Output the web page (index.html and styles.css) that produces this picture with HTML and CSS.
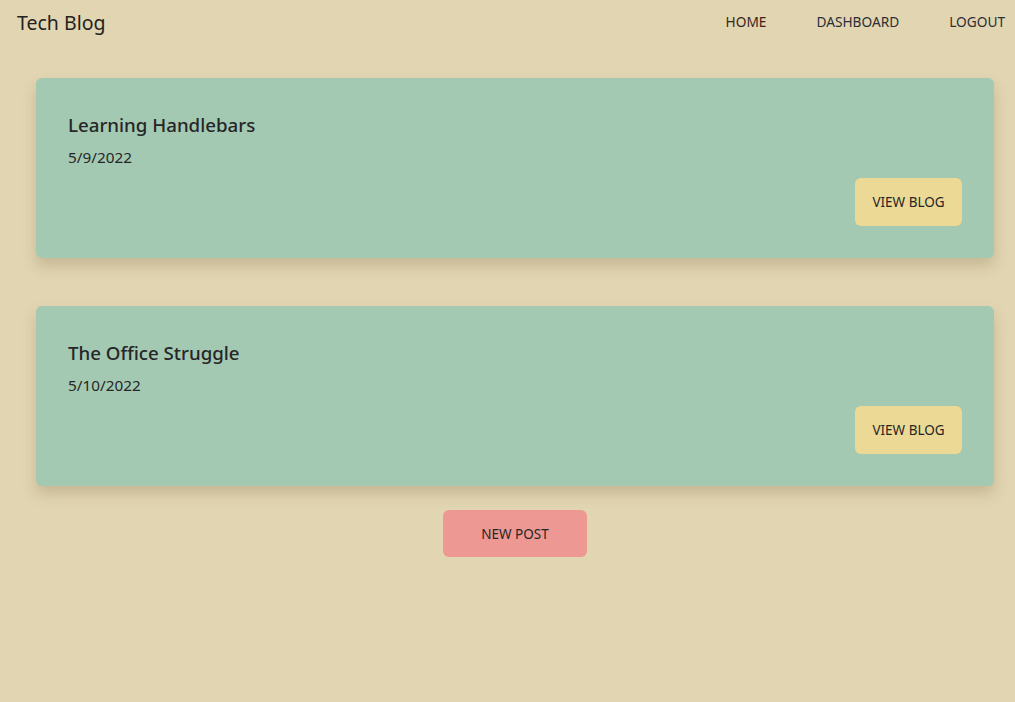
FILE: index.html
```html
<!DOCTYPE html>
<html>
<head>
<meta charset="utf-8">
<title>Tech Blog</title>
<link rel="stylesheet" href="styles.css">
</head>
<body>
<header class="navbar">
  <a class="brand" href="#">Tech Blog</a>
  <nav class="nav">
    <a class="nav-link active" href="#">HOME</a>
    <a class="nav-link" href="#">DASHBOARD</a>
    <a class="nav-link" href="#">LOGOUT</a>
  </nav>
</header>
<main class="content">
  <article class="card">
    <h2 class="card-title">Learning Handlebars</h2>
    <p class="card-date">5/9/2022</p>
    <div class="card-actions"><a class="btn btn-view" href="#">VIEW BLOG</a></div>
  </article>
  <article class="card">
    <h2 class="card-title">The Office Struggle</h2>
    <p class="card-date">5/10/2022</p>
    <div class="card-actions"><a class="btn btn-view" href="#">VIEW BLOG</a></div>
  </article>
  <div class="new-post-row"><a class="btn btn-new" href="#">NEW POST</a></div>
</main>
</body>
</html>
```
FILE: styles.css
```css
* { box-sizing: border-box; }
html, body { margin: 0; padding: 0; }
body {
  background: #e2d5b2;
  font-family: "Noto Sans", "Open Sans", sans-serif;
  color: #262626;
  min-height: 702px;
}
a { text-decoration: none; color: inherit; }
.navbar {
  display: flex;
  justify-content: space-between;
  align-items: center;
  height: 44px;
  padding: 0 10px 0 17px;
}
.brand {
  font-size: 19.5px;
  color: #222;
}
.nav { display: flex; gap: 50px; margin-top: -2px; }
.nav-link {
  font-size: 13.7px;
  color: #2b2f36;
}
.nav-link.active { color: #3d2418; }
.content {
  margin-left: 36px;
  width: 958px;
  padding-top: 34px;
  display: flex;
  flex-direction: column;
}
.card {
  background: #a3c9b3;
  border-radius: 6px;
  height: 180px;
  padding: 34px 32px 32px 32px;
  display: flex;
  flex-direction: column;
  box-shadow: 0 8px 14px rgba(120, 100, 60, 0.25);
  margin-bottom: 48px;
}
.card:last-of-type { margin-bottom: 24px; }
.card-title {
  margin: 0;
  font-size: 18.7px;
  font-weight: 500;
  line-height: 26px;
  color: #262626;
}
.card-date {
  margin: 9px 0 0;
  font-size: 15.3px;
  line-height: 20px;
}
.card-actions {
  margin-top: auto;
  display: flex;
  justify-content: flex-end;
}
.btn {
  display: inline-flex;
  align-items: center;
  justify-content: center;
  border-radius: 6px;
  font-size: 13.5px;
  color: #262626;
}
.btn-view {
  width: 107px;
  height: 48px;
  background: #ecd995;
}
.new-post-row { display: flex; justify-content: center; }
.btn-new {
  width: 144px;
  height: 47px;
  background: #ee9893;
}
```
